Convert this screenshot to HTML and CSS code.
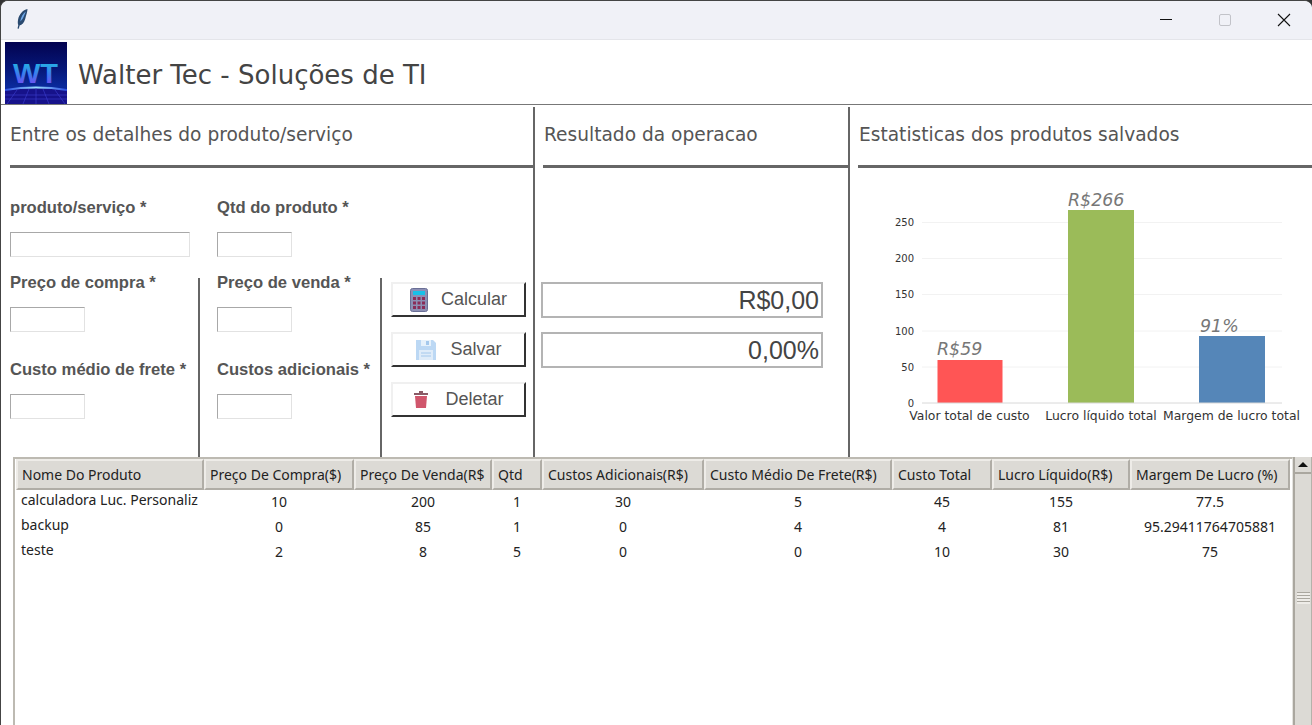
FILE: index.html
```html
<!DOCTYPE html>
<html lang="pt-BR">
<head>
    <meta charset="UTF-8">
    <title>Walter Tec</title>
    <link rel="stylesheet" href="styles.css">
</head>
<body>
    <div class="window">
        <div class="titlebar">
            <svg class="feather" width="14" height="22" viewBox="0 0 14 22">
                <path d="M12.500 1C8 2 4 6 3 12c-.4 2.500-.2 4 .3 5l-.8 3.500 1.300.2.8-3.300c2.500-.5 4.500-3 5.600-6.500C11.200 7 12.500 3.500 12.500 1z" fill="#2a4a70"/>
                <path d="M10.800 3.500C8 5.500 6 9 5.200 13.500c1.800-1.500 3.300-4 4.300-6.800z" fill="#6ea8ea"/>
            </svg>
            <div class="win-buttons">
                <svg width="14" height="14" viewBox="0 0 14 14"><path d="M1 6.500h12" stroke="#111" stroke-width="1"/></svg>
                <svg width="14" height="14" viewBox="0 0 14 14"><rect x="1.500" y="1.500" width="11" height="11" rx="1.500" fill="none" stroke="#c2c3c9"/></svg>
                <svg width="14" height="14" viewBox="0 0 14 14"><path d="M1 1l12 12M13 1L1 13" stroke="#111" stroke-width="1.100"/></svg>
            </div>
        </div>

        <div class="brand">
            <svg class="logo" width="62" height="62" viewBox="0 0 62 62">
                <defs>
                    <linearGradient id="sky" x1="0" y1="0" x2="0" y2="1">
                        <stop offset="0" stop-color="#03034f"/>
                        <stop offset="0.45" stop-color="#06187a"/>
                        <stop offset="0.72" stop-color="#0a2a9c"/>
                        <stop offset="1" stop-color="#140f6e"/>
                    </linearGradient>
                    <linearGradient id="letters" x1="0" y1="0" x2="0" y2="1">
                        <stop offset="0" stop-color="#18c8e0"/>
                        <stop offset="0.55" stop-color="#3f78ee"/>
                        <stop offset="1" stop-color="#8a3cf4"/>
                    </linearGradient>
                    <linearGradient id="glow" x1="0" y1="0" x2="1" y2="0">
                        <stop offset="0" stop-color="#2a4ce0"/>
                        <stop offset="0.5" stop-color="#9adfff"/>
                        <stop offset="1" stop-color="#2a4ce0"/>
                    </linearGradient>
                </defs>
                <rect width="62" height="62" fill="url(#sky)"/>
                <text x="8" y="41" class="logo-text" fill="url(#letters)" textLength="45" lengthAdjust="spacingAndGlyphs">WT</text>
                <path d="M0 48Q31 43 62 48V62H0z" fill="#16128a"/>
                <path d="M0 48Q31 43 62 48" fill="none" stroke="url(#glow)" stroke-width="2"/>
                <path d="M0 53H62M0 57H62M12 48L2 62M24 47L18 62M31 46V62M38 47L44 62M50 48L60 62" stroke="#3c3fd0" stroke-width="0.600"/>
            </svg>
            <span class="brand-name">Walter Tec - Soluções de TI</span>
        </div>

        <div class="panels">
            <section class="panel panel-form">
                <h2 class="panel-title">Entre os detalhes do produto/serviço</h2>
                <div class="form-top">
                    <div class="field field-a">
                        <label>produto/serviço *</label>
                        <input type="text" class="input-wide">
                    </div>
                    <div class="field">
                        <label>Qtd do produto *</label>
                        <input type="text" class="input-small">
                    </div>
                </div>
                <div class="form-bottom">
                    <div class="form-col col-a">
                        <div class="field">
                            <label>Preço de compra *</label>
                            <input type="text" class="input-small">
                        </div>
                        <div class="field">
                            <label>Custo médio de frete *</label>
                            <input type="text" class="input-small">
                        </div>
                    </div>
                    <div class="form-col col-b">
                        <div class="field">
                            <label>Preço de venda *</label>
                            <input type="text" class="input-small">
                        </div>
                        <div class="field">
                            <label>Custos adicionais *</label>
                            <input type="text" class="input-small">
                        </div>
                    </div>
                    <div class="form-actions">
                        <button class="action">
                            <svg width="18" height="24" viewBox="0 0 18 24">
                                <rect x="0.500" y="0.500" width="17" height="23" rx="2" fill="#8c8fb4" stroke="#6a6f96"/>
                                <rect x="3" y="3" width="12" height="4" fill="#18c0e8"/>
                                <g fill="#8a2c58">
                                    <rect x="3" y="9" width="3" height="3"/><rect x="7.500" y="9" width="3" height="3"/><rect x="12" y="9" width="3" height="3"/>
                                    <rect x="3" y="13.500" width="3" height="3"/><rect x="7.500" y="13.500" width="3" height="3"/><rect x="12" y="13.500" width="3" height="3"/>
                                    <rect x="3" y="18" width="3" height="3"/><rect x="7.500" y="18" width="3" height="3"/><rect x="12" y="18" width="3" height="3"/>
                                </g>
                            </svg>
                            <span>Calcular</span>
                        </button>
                        <button class="action">
                            <svg width="22" height="22" viewBox="0 0 22 22">
                                <path d="M1 1h17l3 3v17H1z" fill="#bcd8f4"/>
                                <rect x="6" y="1" width="10" height="6" fill="#e6f1fb"/>
                                <rect x="11" y="2" width="3" height="4" fill="#a4c8ec"/>
                                <rect x="4" y="11" width="14" height="10" fill="#dfecf9"/>
                                <path d="M6 14h10M6 17h10" stroke="#a4c8ec"/>
                            </svg>
                            <span>Salvar</span>
                        </button>
                        <button class="action action-delete">
                            <svg width="16" height="17" viewBox="0 0 16 17">
                                <path d="M6 0h4v2h5v2H1V2h5z" fill="#8a5a66"/>
                                <path d="M2 5h12l-1 12H3z" fill="#d0566c"/>
                            </svg>
                            <span>Deletar</span>
                        </button>
                    </div>
                </div>
            </section>

            <section class="panel panel-result">
                <h2 class="panel-title">Resultado da operacao</h2>
                <div class="result-list">
                    <output class="result">R$0,00</output>
                    <output class="result">0,00%</output>
                </div>
            </section>

            <section class="panel panel-stats">
                <h2 class="panel-title">Estatisticas dos produtos salvados</h2>
                <svg class="chart" width="462" height="290" viewBox="850 168 462 290">
                    <g class="grid">
                        <path d="M922 222.500H1282M922 258.500H1282M922 294.500H1282M922 331H1282M922 367H1282"/>
                    </g>
                    <rect x="937.500" y="360" width="65" height="43" fill="#ff5555"/>
                    <rect x="1068" y="210" width="66" height="193" fill="#9bbb59"/>
                    <rect x="1199" y="336" width="66" height="67" fill="#5586b8"/>
                    <path d="M922 403H1282" stroke="#d8d8d8" stroke-width="1"/>
                    <g class="ticks">
                        <text x="914" y="226">250</text>
                        <text x="914" y="262">200</text>
                        <text x="914" y="298">150</text>
                        <text x="914" y="335">100</text>
                        <text x="914" y="371">50</text>
                        <text x="914" y="407">0</text>
                    </g>
                    <g class="bar-values">
                        <text x="937" y="355">R$59</text>
                        <text x="1068" y="206">R$266</text>
                        <text x="1200" y="332">91%</text>
                    </g>
                    <g class="categories">
                        <text x="969.500" y="420">Valor total de custo</text>
                        <text x="1101" y="420">Lucro líquido total</text>
                        <text x="1231.500" y="420">Margem de lucro total</text>
                    </g>
                </svg>
            </section>
        </div>

        <div class="table-area">
            <div class="table-frame">
                <table class="products">
                    <colgroup>
                        <col class="c-name"><col class="c-buy"><col class="c-sell"><col class="c-qty"><col class="c-extra"><col class="c-freight"><col class="c-total"><col class="c-profit"><col class="c-margin">
                    </colgroup>
                    <thead>
                        <tr>
                            <th>Nome Do Produto</th>
                            <th>Preço De Compra($)</th>
                            <th>Preço De Venda(R$</th>
                            <th>Qtd</th>
                            <th>Custos Adicionais(R$)</th>
                            <th>Custo Médio De Frete(R$)</th>
                            <th>Custo Total</th>
                            <th>Lucro Líquido(R$)</th>
                            <th>Margem De Lucro (%)</th>
                        </tr>
                    </thead>
                    <tbody>
                        <tr><td>calculadora Luc. Personaliz</td><td>10</td><td>200</td><td>1</td><td>30</td><td>5</td><td>45</td><td>155</td><td>77.5</td></tr>
                        <tr><td>backup</td><td>0</td><td>85</td><td>1</td><td>0</td><td>4</td><td>4</td><td>81</td><td>95.29411764705881</td></tr>
                        <tr><td>teste</td><td>2</td><td>8</td><td>5</td><td>0</td><td>0</td><td>10</td><td>30</td><td>75</td></tr>
                    </tbody>
                </table>
            </div>
            <div class="scrollbar">
                <div class="scroll-up"><span class="arrow"></span></div>
                <div class="scroll-thumb"><span class="grip"></span></div>
            </div>
        </div>
    </div>
</body>
</html>
```

FILE: styles.css
```css
html, body {
    margin: 0;
    height: 100%;
    overflow: hidden;
    background: #333;
}

.window {
    height: 725px;
    display: flex;
    flex-direction: column;
    background: #fff;
    border-top: 1px solid #444;
    border-left: 1px solid #444;
    border-radius: 8px 8px 0 0;
    box-sizing: border-box;
    overflow: hidden;
    color: #444;
    font-family: "Liberation Sans", Arial, sans-serif;
}

/* title bar */
.titlebar {
    height: 39px;
    flex: none;
    display: flex;
    align-items: center;
    justify-content: space-between;
    background: #f0f1f7;
    border-bottom: 1px solid #e4e5ea;
    box-sizing: border-box;
    padding-left: 14px;
}

.feather {
    margin-top: -2px;
}

.win-buttons {
    display: flex;
    gap: 45px;
    padding-right: 21px;
    margin-top: -1px;
}

/* brand */
.brand {
    height: 65px;
    flex: none;
    display: flex;
    align-items: flex-start;
    border-bottom: 1px solid #777;
    box-sizing: border-box;
    padding: 2px 0 0 4px;
}

.logo {
    display: block;
}

.logo-text {
    font: bold 28px "Liberation Sans", sans-serif;
}

.brand-name {
    font: 26px "DejaVu Sans", sans-serif;
    margin: 18px 0 0 11px;
    line-height: 30px;
    white-space: nowrap;
}

/* panels */
.panels {
    height: 352px;
    flex: none;
    display: flex;
    padding-top: 2px;
    box-sizing: border-box;
}

.panel {
    box-sizing: border-box;
    flex: none;
    height: 100%;
}

.panel-form {
    width: 534px;
    border-right: 2px solid #666;
    padding-left: 9px;
}

.panel-result {
    width: 315px;
    border-right: 2px solid #666;
    padding-left: 6px;
}

.panel-stats {
    flex: 1;
    padding-left: 6px;
    position: relative;
}

.panel-title {
    margin: 0;
    height: 61px;
    box-sizing: border-box;
    padding: 16px 0 0 0;
    font: 18.600px/24px "DejaVu Sans", sans-serif;
    color: #555;
    border-bottom: 3px solid #666;
    white-space: nowrap;
}

.panel-result .panel-title,
.panel-stats .panel-title {
    margin-left: 2px;
    padding-left: 1px;
}

/* form */
.field {
    display: flex;
    flex-direction: column;
    align-items: flex-start;
}

.field label {
    font-size: 16.600px;
    font-weight: bold;
    line-height: 20px;
    color: #555;
    white-space: nowrap;
}

input {
    height: 25px;
    box-sizing: border-box;
    border: 1px solid #e2e2e2;
    border-top-color: #a8a8a8;
    border-left-color: #a8a8a8;
    background: #fff;
    padding: 0;
    margin: 0;
    outline: none;
}

.input-wide {
    width: 180px;
}

.input-small {
    width: 75px;
}

.form-top {
    display: flex;
    padding-top: 30px;
    height: 110px;
    box-sizing: border-box;
}

.form-top .field {
    gap: 14px;
}

.form-top .field-a {
    width: 207px;
}

.form-bottom {
    display: flex;
    height: 179px;
}

.form-col {
    box-sizing: border-box;
    height: 100%;
    display: flex;
    flex-direction: column;
    gap: 28px;
}

.form-col .field {
    gap: 14px;
    height: 59px;
}

.form-col .field:first-child {
    margin-top: -5px;
}

.col-a {
    width: 190px;
    border-right: 2px solid #666;
}

.col-b {
    width: 182px;
    padding-left: 17px;
    border-right: 2px solid #666;
}

.form-actions {
    display: flex;
    flex-direction: column;
    gap: 15px;
    padding: 4px 0 0 9px;
}

.action {
    width: 135px;
    height: 35px;
    box-sizing: border-box;
    display: flex;
    align-items: center;
    justify-content: center;
    gap: 13px;
    background: #fff;
    border: 2px solid #f0f0f0;
    border-right-color: #333;
    border-bottom-color: #333;
    padding: 0;
    font: 18px "Liberation Sans", Arial, sans-serif;
    color: #555;
}

.action-delete {
    gap: 16px;
}

/* result */
.result-list {
    display: flex;
    flex-direction: column;
    gap: 14px;
    padding-top: 114px;
}

.result {
    display: block;
    width: 282px;
    height: 36px;
    box-sizing: border-box;
    border: 2px solid #b4b4b4;
    text-align: right;
    font-size: 25px;
    line-height: 32px;
    padding-right: 2px;
    color: #444;
}

/* chart */
.chart {
    position: absolute;
    left: 0;
    top: 61px;
    display: block;
}

.grid path {
    fill: none;
    stroke: #f2f2f2;
    stroke-width: 1;
}

.ticks text {
    font: 10px "DejaVu Sans", sans-serif;
    text-anchor: end;
    fill: #333;
}

.bar-values text {
    font: italic 17.400px "DejaVu Sans", sans-serif;
    fill: #777;
}

.categories text {
    font: 12.400px "DejaVu Sans", sans-serif;
    text-anchor: middle;
    fill: #333;
}

/* table */
.table-area {
    flex: 1;
    min-height: 0;
    display: flex;
    padding-left: 12px;
}

.table-frame {
    width: 1280px;
    margin-bottom: -10px;
    box-sizing: border-box;
    border: 2px solid #bdbab2;
    border-right: 1px solid #e4e3df;
    padding-left: 1px;
    overflow: hidden;
}

.products {
    table-layout: fixed;
    border-collapse: separate;
    border-spacing: 0;
    width: 1274px;
    font: 14px/19px "Noto Sans", sans-serif;
    color: #222;
}

.c-name { width: 188px; }
.c-buy { width: 150px; }
.c-sell { width: 138px; }
.c-qty { width: 50px; }
.c-extra { width: 162px; }
.c-freight { width: 188px; }
.c-total { width: 100px; }
.c-profit { width: 138px; }
.c-margin { width: 160px; }

.products th {
    height: 31px;
    box-sizing: border-box;
    padding: 0 0 0 4px;
    background: #dcdad5;
    border: 2px solid #b0ada6;
    border-top-color: #eeece8;
    border-left-color: #eeece8;
    font-weight: normal;
    text-align: left;
    white-space: nowrap;
    overflow: hidden;
}

.products td {
    height: 25px;
    box-sizing: border-box;
    padding: 0 0 2px;
    text-align: center;
    white-space: nowrap;
    overflow: hidden;
}

.products td:first-child {
    text-align: left;
    padding: 0 0 6px 5px;
}

/* scrollbar */
.scrollbar {
    width: 19px;
    flex: none;
    margin-bottom: -10px;
    display: flex;
    flex-direction: column;
    background: #dcdad5;
    border-left: 2px solid #aaa79f;
    border-right: 1px solid #b5b2aa;
    box-sizing: border-box;
}

.scroll-up {
    height: 17px;
    flex: none;
    display: flex;
    align-items: center;
    justify-content: center;
    background: #dcdad5;
    border-bottom: 2px solid #aaa79f;
    box-sizing: border-box;
}

.arrow {
    width: 0;
    height: 0;
    border-left: 5px solid transparent;
    border-right: 5px solid transparent;
    border-bottom: 5px solid #111;
}

.scroll-thumb {
    flex: 1;
    display: flex;
    justify-content: center;
    align-items: flex-start;
    padding-top: 118px;
}

.grip {
    width: 13px;
    height: 12px;
    background: repeating-linear-gradient(#aaa79f 0 1px, #eeece8 1px 3px);
}
```
